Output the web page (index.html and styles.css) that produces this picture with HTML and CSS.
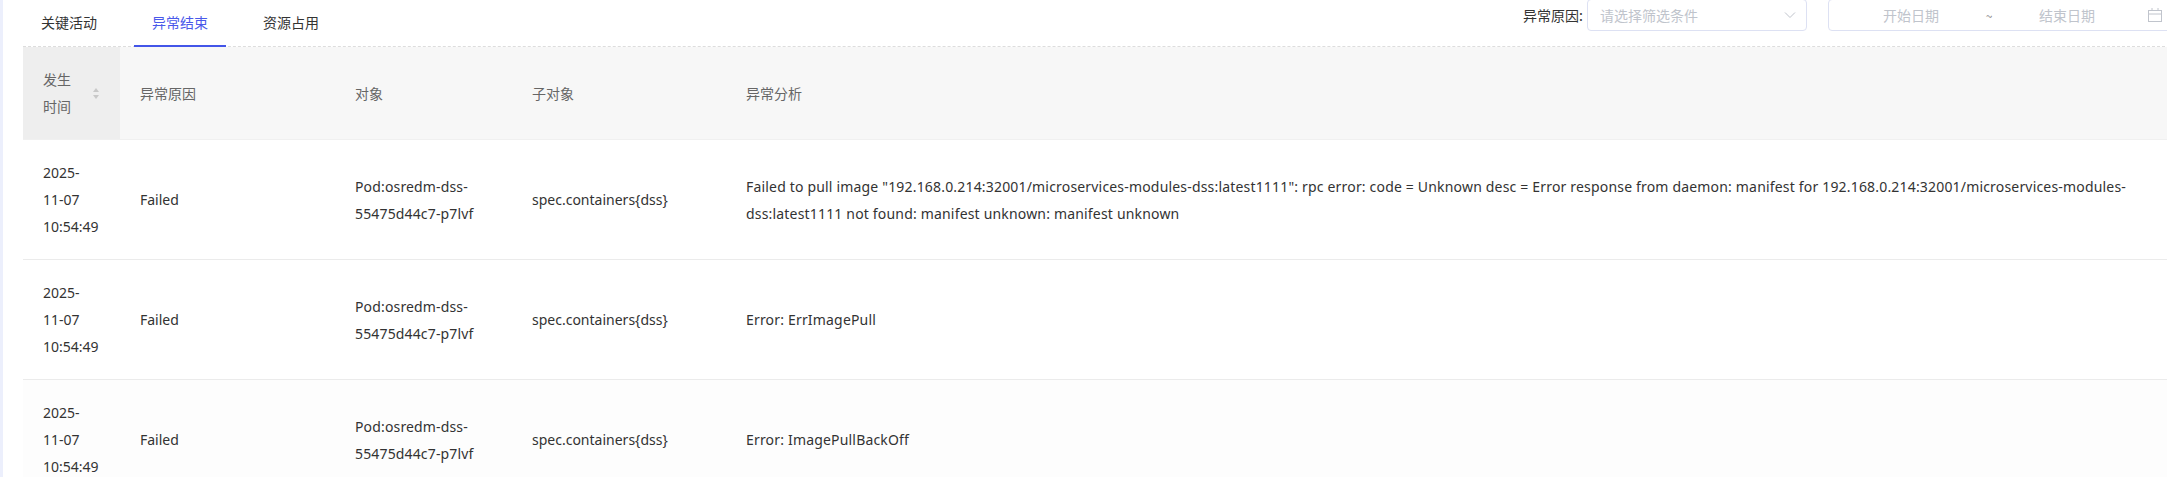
FILE: index.html
```html
<!DOCTYPE html>
<html lang="zh-CN">
<head>
<meta charset="utf-8">
<title>异常结束</title>
<link rel="stylesheet" href="styles.css">
</head>
<body>
<div class="app">
  <div class="stripe"></div>
  <main class="panel">
    <div class="toolbar">
      <nav class="tabs">
        <div class="tab">关键活动</div>
        <div class="tab active">异常结束</div>
        <div class="tab">资源占用</div>
      </nav>
      <div class="filters">
        <span class="filter-label">异常原因:</span>
        <div class="select">
          <span class="placeholder">请选择筛选条件</span>
          <svg class="chevron" width="12" height="8" viewBox="0 0 12 8"><polyline points="1,1.5 6,6.5 11,1.5" fill="none" stroke="#c0c4cc" stroke-width="1"/></svg>
        </div>
        <div class="daterange">
          <span class="date-input">开始日期</span>
          <span class="tilde">~</span>
          <span class="date-input">结束日期</span>
          <svg class="cal" width="16" height="16" viewBox="0 0 16 16"><rect x="1.5" y="3.5" width="13" height="11" fill="none" stroke="#c0c4cc"/><line x1="1.5" y1="7" x2="14.5" y2="7" stroke="#c0c4cc"/><line x1="5" y1="1" x2="5" y2="4" stroke="#c0c4cc"/><line x1="11" y1="1" x2="11" y2="4" stroke="#c0c4cc"/></svg>
        </div>
      </div>
    </div>
    <table class="grid">
      <colgroup>
        <col class="c-time"><col class="c-reason"><col class="c-obj"><col class="c-sub"><col class="c-analysis">
      </colgroup>
      <thead>
        <tr>
          <th class="sorted"><div class="th-sort"><span class="th-text">发生时间</span><span class="caret"><i class="up"></i><i class="down"></i></span></div></th>
          <th>异常原因</th>
          <th>对象</th>
          <th>子对象</th>
          <th>异常分析</th>
        </tr>
      </thead>
      <tbody>
        <tr>
          <td>2025-11-07 10:54:49</td>
          <td>Failed</td>
          <td class="obj">Pod:osredm-dss-55475d44c7-p7lvf</td>
          <td>spec.containers{dss}</td>
          <td class="analysis">Failed to pull image "192.168.0.214:32001/microservices-modules-dss:latest1111": rpc error: code = Unknown desc = Error response from daemon: manifest for 192.168.0.214:32001/microservices-modules-dss:latest1111 not found: manifest unknown: manifest unknown</td>
        </tr>
        <tr>
          <td>2025-11-07 10:54:49</td>
          <td>Failed</td>
          <td class="obj">Pod:osredm-dss-55475d44c7-p7lvf</td>
          <td>spec.containers{dss}</td>
          <td class="analysis">Error: ErrImagePull</td>
        </tr>
        <tr class="hover">
          <td>2025-11-07 10:54:49</td>
          <td>Failed</td>
          <td class="obj">Pod:osredm-dss-55475d44c7-p7lvf</td>
          <td>spec.containers{dss}</td>
          <td class="analysis">Error: ImagePullBackOff</td>
        </tr>
      </tbody>
    </table>
  </main>
</div>
</body>
</html>
```

FILE: styles.css
```css
html, body {
  margin: 0;
  padding: 0;
  background: #fff;
  overflow: hidden;
}
body {
  font-family: "Noto Sans", "Noto Sans CJK SC", sans-serif;
  font-size: 14px;
  color: #333;
}
.app {
  display: flex;
  width: 2190px;
  min-height: 477px;
}
.stripe {
  flex: none;
  width: 3px;
  background: #eceffc;
}
.panel {
  flex: 1;
  min-width: 0;
  padding-left: 20px;
}
.toolbar {
  display: flex;
  justify-content: space-between;
  align-items: flex-start;
  height: 46px;
  border-bottom: 1px dashed #dddddd;
}
.tabs {
  display: flex;
  gap: 19px;
}
.tab {
  height: 45px;
  line-height: 45px;
  padding: 0 18px;
  border-bottom: 2px solid transparent;
  margin-bottom: -1px;
  color: #333;
  font-family: "Noto Sans CJK SC", sans-serif;
  font-size: 14px;
}
.tab.active {
  color: #4a59ea;
  border-bottom-color: #4355e8;
}
.filters {
  display: flex;
  align-items: center;
  margin-top: -1px;
  margin-right: 12px;
  height: 32px;
  font-family: "Noto Sans CJK SC", sans-serif;
}
.filter-label {
  color: #333;
  margin-right: 4px;
}
.select {
  width: 220px;
  height: 32px;
  box-sizing: border-box;
  border: 1px solid #dde1f3;
  border-radius: 4px;
  display: flex;
  align-items: center;
  justify-content: space-between;
  padding: 0 10px 0 12px;
}
.placeholder {
  color: #c0c4cc;
}
.chevron {
  display: block;
}
.daterange {
  margin-left: 21px;
  width: 350px;
  height: 32px;
  box-sizing: border-box;
  border: 1px solid #dde1f3;
  border-radius: 4px;
  display: flex;
  align-items: center;
  padding-left: 10px;
}
.date-input {
  width: 144px;
  text-align: center;
  color: #c0c4cc;
}
.tilde {
  width: 12px;
  text-align: center;
  color: #888;
  font-size: 12px;
}
.cal {
  display: block;
  margin-left: 8px;
}
.grid {
  width: 2167px;
  border-collapse: collapse;
  table-layout: fixed;
}
.c-time { width: 97px; }
.c-reason { width: 215px; }
.c-obj { width: 177px; }
.c-sub { width: 214px; }
.grid th,
.grid td {
  padding: 19px 20px;
  line-height: 27px;
  text-align: left;
  vertical-align: middle;
  border-bottom: 1px solid #ebebeb;
}
.grid th {
  background: #f7f7f7;
  color: #666;
  font-weight: normal;
  font-family: "Noto Sans CJK SC", sans-serif;
  border-bottom-color: #f0f0f0;
}
.grid th.sorted {
  background: #eeeeee;
}
.th-sort {
  display: flex;
  align-items: center;
  gap: 10px;
}
.th-text {
  flex: 1;
  min-width: 0;
}
.caret {
  flex: none;
  display: flex;
  flex-direction: column;
  gap: 3px;
  width: 7px;
}
.caret i {
  display: block;
  width: 0;
  height: 0;
  border-left: 3.5px solid transparent;
  border-right: 3.5px solid transparent;
}
.caret .up {
  border-bottom: 4px solid #c8c8c8;
}
.caret .down {
  border-top: 4px solid #c8c8c8;
}
.grid td {
  color: #333;
}
.grid td.analysis {
  letter-spacing: 0.18px;
}
.grid td.obj {
  letter-spacing: 0.15px;
}
.grid tr.hover td {
  background: #fdfdfd;
}
```
